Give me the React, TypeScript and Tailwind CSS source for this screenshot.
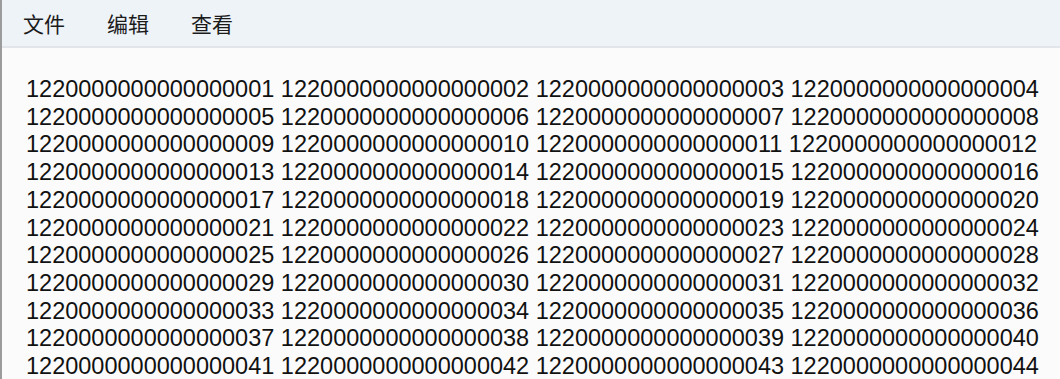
import React from "react";

const menus = ["文件", "编辑", "查看"];

const lines: string[] = [];
for (let r = 0; r < 12; r++) {
  const row: string[] = [];
  for (let c = 1; c <= 4; c++) {
    const n = r * 4 + c;
    row.push("12200000000000000" + String(n).padStart(2, "0"));
  }
  lines.push(row.join(" "));
}

const App = () => {
  return (
    <div className="h-[379px] w-[1060px] overflow-hidden border-l-2 border-[#9c9c9c] bg-[#fbfbfb] flex flex-col">
      <div className="h-[48px] shrink-0 bg-[#eef3f8] border-b-2 border-[#e2e6ea] flex items-center pl-[21px] gap-[42px] text-[21px] text-[#1b1b1b] font-['Noto_Sans_CJK_SC',sans-serif]">
        {menus.map((m) => (
          <span key={m} className="leading-none pt-[1px]">
            {m}
          </span>
        ))}
      </div>
      <div className="pt-[28px] pl-[24px] text-[23.5px] leading-[27.7px] text-[#111] font-['Liberation_Sans',Arial,sans-serif]">
        {lines.map((l, i) => (
          <div key={i} className="whitespace-pre">
            {l}
          </div>
        ))}
      </div>
    </div>
  );
};

export default App;
